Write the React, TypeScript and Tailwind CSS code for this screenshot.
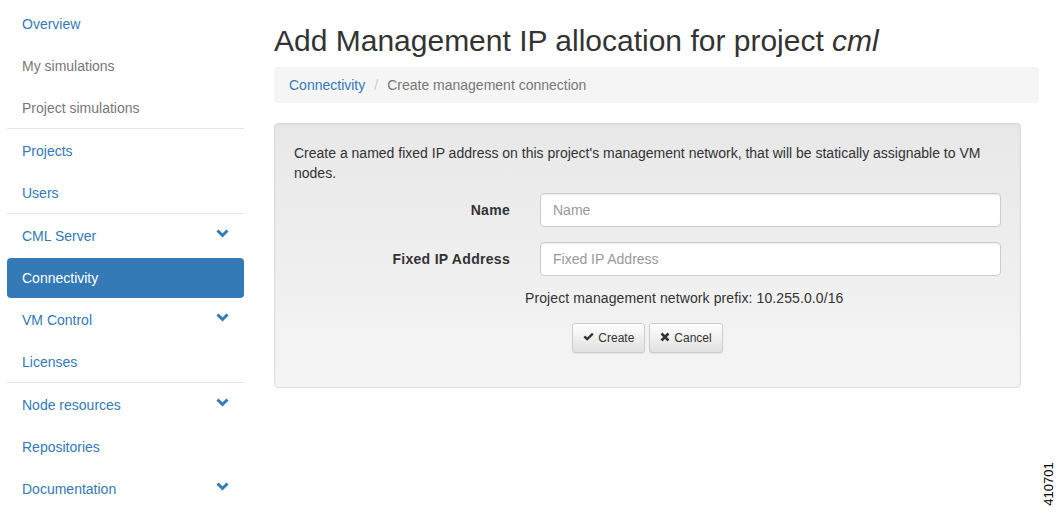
import React from "react";

const Chevron = () => (
  <svg width="13" height="9" viewBox="0 0 13 9" className="mr-[15px] -mt-[6px]">
    <path d="M1.5 1.5 L6.5 6.5 L11.5 1.5" fill="none" stroke="#337ab7" strokeWidth="3" strokeLinecap="butt" strokeLinejoin="miter" />
  </svg>
);

type Item = { label: string; gray?: boolean; active?: boolean; chevron?: boolean } | "sep";

const items: Item[] = [
  { label: "Overview" },
  { label: "My simulations", gray: true },
  { label: "Project simulations", gray: true },
  "sep",
  { label: "Projects" },
  { label: "Users" },
  "sep",
  { label: "CML Server", chevron: true },
  { label: "Connectivity", active: true },
  { label: "VM Control", chevron: true },
  { label: "Licenses" },
  "sep",
  { label: "Node resources", chevron: true },
  { label: "Repositories" },
  { label: "Documentation", chevron: true },
];

const CheckIcon = () => (
  <svg width="11" height="10" viewBox="0 0 11 10" className="inline-block mr-[4px] -mt-[2px] align-middle">
    <path d="M0.5 5.2 L2.2 3.5 L4.2 5.5 L9 0.7 L10.6 2.4 L4.2 8.8 Z" fill="#333" />
  </svg>
);

const XIcon = () => (
  <svg width="10" height="10" viewBox="0 0 10 10" className="inline-block mr-[4px] -mt-[2px] align-middle">
    <path d="M1.5 1.5 L8.5 8.5 M8.5 1.5 L1.5 8.5" stroke="#333" strokeWidth="2.6" fill="none" />
  </svg>
);

export default function App() {
  return (
    <div className="relative w-[1057px] h-[513px] bg-white overflow-hidden font-['Liberation_Sans',Arial,sans-serif] text-[14px] text-[#333]">
      <div className="flex">
        <div className="w-[244px] pl-[7px] pt-[2px] shrink-0">
          {items.map((it, i) =>
            it === "sep" ? (
              <div key={i} className="h-px bg-[#e5e5e5]" />
            ) : (
              <div
                key={i}
                className={
                  "mt-[2px] h-[40px] pl-[15px] flex items-center justify-between leading-5 rounded-[4px] " +
                  (it.active ? "bg-[#337ab7] text-white" : it.gray ? "text-[#777]" : "text-[#337ab7]")
                }
              >
                <span>{it.label}</span>
                {it.chevron && <Chevron />}
              </div>
            )
          )}
        </div>
        <div className="ml-[30px] w-[765px] pt-[24px]">
          <h2 className="text-[30px] leading-[33px] font-normal text-[#333]">
            Add Management IP allocation for project <em>cml</em>
          </h2>
          <div className="mt-[10px] h-[36px] bg-[#f5f5f5] rounded-[4px] px-[15px] flex items-center leading-5">
            <span className="text-[#337ab7]">Connectivity</span>
            <span className="text-[#ccc] mx-[9px]">/</span>
            <span className="text-[#777]">Create management connection</span>
          </div>
          <div className="mt-[20px] w-[747px] border border-[#dcdcdc] rounded-[4px] p-[19px] bg-gradient-to-b from-[#e8e8e8] to-[#f5f5f5] shadow-[inset_0_1px_3px_rgba(0,0,0,0.05)]">
            <p className="leading-5 mb-[10px]">
              Create a named fixed IP address on this project's management network, that will be statically assignable to VM nodes.
            </p>
            <div className="flex mb-[15px]">
              <label className="w-[216px] text-right font-bold pt-[7px] leading-5 tracking-[0.3px]">Name</label>
              <input
                placeholder="Name"
                className="ml-[30px] flex-1 h-[34px] bg-white border border-[#ccc] rounded-[4px] px-[12px] text-[14px] leading-5 placeholder:text-[#999] shadow-[inset_0_1px_1px_rgba(0,0,0,0.075)] outline-none"
              />
            </div>
            <div className="flex">
              <label className="w-[216px] text-right font-bold pt-[7px] leading-5 tracking-[0.3px]">Fixed IP Address</label>
              <input
                placeholder="Fixed IP Address"
                className="ml-[30px] flex-1 h-[34px] bg-white border border-[#ccc] rounded-[4px] px-[12px] text-[14px] leading-5 placeholder:text-[#999] shadow-[inset_0_1px_1px_rgba(0,0,0,0.075)] outline-none"
              />
            </div>
            <div className="mt-[12px] ml-[231px] leading-5 tracking-[0.1px]">Project management network prefix: 10.255.0.0/16</div>
            <div className="mt-[15px] mb-[15px] flex justify-center gap-[4px]">
              <button className="h-[30px] px-[10px] text-[12px] leading-[18px] text-[#333] border border-[#ccc] rounded-[3px] bg-gradient-to-b from-white to-[#e0e0e0] shadow-[inset_0_1px_0_rgba(255,255,255,0.15),0_1px_1px_rgba(0,0,0,0.075)] flex items-center">
                <CheckIcon />
                Create
              </button>
              <button className="h-[30px] px-[10px] text-[12px] leading-[18px] text-[#333] border border-[#ccc] rounded-[3px] bg-gradient-to-b from-white to-[#e0e0e0] shadow-[inset_0_1px_0_rgba(255,255,255,0.15),0_1px_1px_rgba(0,0,0,0.075)] flex items-center">
                <XIcon />
                Cancel
              </button>
            </div>
          </div>
        </div>
      </div>
      <div className="absolute left-[1048px] top-[484px] -translate-x-1/2 -translate-y-1/2 -rotate-90 text-[13px] leading-none text-black">
        410701
      </div>
    </div>
  );
}
